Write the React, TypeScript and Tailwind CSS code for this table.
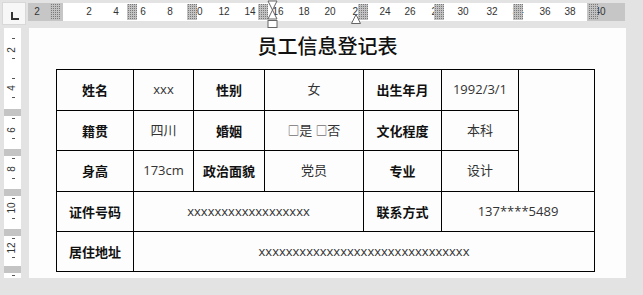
import React from "react";

const hLabels = [
  { t: "2", x: 9 },
  { t: "2", x: 61 },
  { t: "4", x: 88 },
  { t: "6", x: 115 },
  { t: "8", x: 142 },
  { t: "10", x: 169 },
  { t: "12", x: 196 },
  { t: "14", x: 222 },
  { t: "16", x: 250 },
  { t: "18", x: 276 },
  { t: "20", x: 302 },
  { t: "22", x: 330 },
  { t: "24", x: 357 },
  { t: "26", x: 382 },
  { t: "28", x: 409 },
  { t: "30", x: 435 },
  { t: "32", x: 464 },
  { t: "34", x: 490 },
  { t: "36", x: 517 },
  { t: "38", x: 542 },
  { t: "40", x: 572 },
];

// column / row markers on the rulers
const hMarks = [22, 99, 159, 230, 330, 406, 485, 560];
const vMarks = [81, 121, 161, 201, 238];
const vLabels = [
  { t: "2", y: 22 },
  { t: "4", y: 60 },
  { t: "6", y: 102 },
  { t: "8", y: 141 },
  { t: "10", y: 180 },
  { t: "12", y: 220 },
];
const vTicks = [10, 30, 50, 69, 90, 110, 130, 150, 170, 190, 210, 229, 247];

const hatch =
  "bg-[conic-gradient(#7a7a7a_0_25%,#c2c2c2_0)] bg-[length:2px_2px]";

const latin = "font-['Open_Sans','Noto_Sans_CJK_SC',sans-serif]";

function HRuler() {
  return (
    <div className="relative mt-[3px] ml-[2px] h-[18px] w-[597px] bg-[#c6c6c6]">
      <div className="absolute left-[35px] top-0 h-full w-[524px] bg-white" />
      {hLabels.map((l, i) => (
        <span
          key={i}
          className="absolute top-[2px] w-[20px] -translate-x-1/2 text-center font-['Liberation_Sans',sans-serif] text-[10px] leading-[14px] text-[#333]"
          style={{ left: l.x }}
        >
          {l.t}
        </span>
      ))}
      {hMarks.map((x, i) => (
        <div
          key={i}
          className={`absolute top-[1px] h-[16px] w-[10px] ${hatch}`}
          style={{ left: x }}
        />
      ))}
      {/* indent markers */}
      <svg
        className="absolute left-[239px] top-[-3px]"
        width="11"
        height="29"
        viewBox="0 0 11 29"
      >
        <path d="M1 1 H10 L5.5 10 Z" fill="#fff" stroke="#666" />
        <path d="M5.5 10 L10 19 H1 Z" fill="#fff" stroke="#666" />
        <rect x="1" y="20.5" width="9" height="7" fill="#fff" stroke="#666" />
      </svg>
      <svg
        className="absolute left-[323px] top-[11px]"
        width="10"
        height="10"
        viewBox="0 0 10 10"
      >
        <path d="M5 0.5 L9.5 9.5 H0.5 Z" fill="#fff" stroke="#666" />
      </svg>
    </div>
  );
}

function VRuler() {
  return (
    <div className="relative ml-[4px] h-[250px] w-[17px] bg-white">
      {vTicks.map((y, i) => (
        <div
          key={i}
          className="absolute left-[8px] h-[1px] w-[3px] bg-[#555]"
          style={{ top: y }}
        />
      ))}
      {vLabels.map((l, i) => (
        <span
          key={i}
          className="absolute left-[8px] w-[20px] -translate-x-1/2 -translate-y-1/2 -rotate-90 text-center font-['Liberation_Sans',sans-serif] text-[10px] leading-[12px] text-[#333]"
          style={{ top: l.y }}
        >
          {l.t}
        </span>
      ))}
      {vMarks.map((y, i) => (
        <div
          key={i}
          className="absolute left-0 h-[7px] w-full bg-[#c4c4c4]"
          style={{ top: y }}
        />
      ))}
    </div>
  );
}

function Label({ children }: { children: React.ReactNode }) {
  return (
    <td className="border border-black text-center font-['Noto_Sans_CJK_SC',sans-serif] text-[13px] font-bold text-[#111]">
      {children}
    </td>
  );
}

function Value({
  children,
  colSpan,
}: {
  children?: React.ReactNode;
  colSpan?: number;
}) {
  return (
    <td
      colSpan={colSpan}
      className={`border border-black text-center text-[13px] text-[#333] ${latin}`}
    >
      {children}
    </td>
  );
}

export default function App() {
  return (
    <div className="h-[295px] w-[643px] overflow-hidden bg-[#e3e3e3]">
      {/* ruler row */}
      <div className="flex h-[28px]">
        <div className="ml-[2px] mt-[2px] flex h-[23px] w-[24px] items-start justify-center border border-[#d8d8d8] bg-[#f7f7f7] pl-[1px] pt-[9px]">
          <div className="h-[8px] w-[8px] border-b-2 border-l-2 border-[#333]" />
        </div>
        <HRuler />
      </div>

      {/* page row */}
      <div className="flex">
        <VRuler />
        <div className="ml-[8px] flex h-[250px] w-[597px] flex-col bg-[#fdfdfd]">
          <h1 className="mt-[4px] h-[28px] text-center font-['Noto_Sans_CJK_SC',sans-serif] text-[20px] font-medium leading-[28px] text-[#111]">
            员工信息登记表
          </h1>
          <table className="ml-[27px] mt-[9px] w-[538px] table-fixed border-collapse">
            <colgroup>
              <col className="w-[77px]" />
              <col className="w-[60px]" />
              <col className="w-[71px]" />
              <col className="w-[99px]" />
              <col className="w-[78px]" />
              <col className="w-[77px]" />
              <col className="w-[76px]" />
            </colgroup>
            <tbody>
              <tr className="h-[41px]">
                <Label>姓名</Label>
                <Value>xxx</Value>
                <Label>性别</Label>
                <Value>女</Value>
                <Label>出生年月</Label>
                <Value>1992/3/1</Value>
                <td rowSpan={3} className="border border-black" />
              </tr>
              <tr className="h-[40px]">
                <Label>籍贯</Label>
                <Value>四川</Value>
                <Label>婚姻</Label>
                <Value>
                  <span className="text-[11.5px]">□</span>是{" "}
                  <span className="text-[11.5px]">□</span>否
                </Value>
                <Label>文化程度</Label>
                <Value>本科</Value>
              </tr>
              <tr className="h-[41px]">
                <Label>身高</Label>
                <Value>173cm</Value>
                <Label>政治面貌</Label>
                <Value>党员</Value>
                <Label>专业</Label>
                <Value>设计</Value>
              </tr>
              <tr className="h-[40px]">
                <Label>证件号码</Label>
                <Value colSpan={3}>xxxxxxxxxxxxxxxxxx</Value>
                <Label>联系方式</Label>
                <Value colSpan={2}>137****5489</Value>
              </tr>
              <tr className="h-[40px]">
                <Label>居住地址</Label>
                <Value colSpan={6}>xxxxxxxxxxxxxxxxxxxxxxxxxxxxxxx</Value>
              </tr>
            </tbody>
          </table>
        </div>
      </div>
    </div>
  );
}
